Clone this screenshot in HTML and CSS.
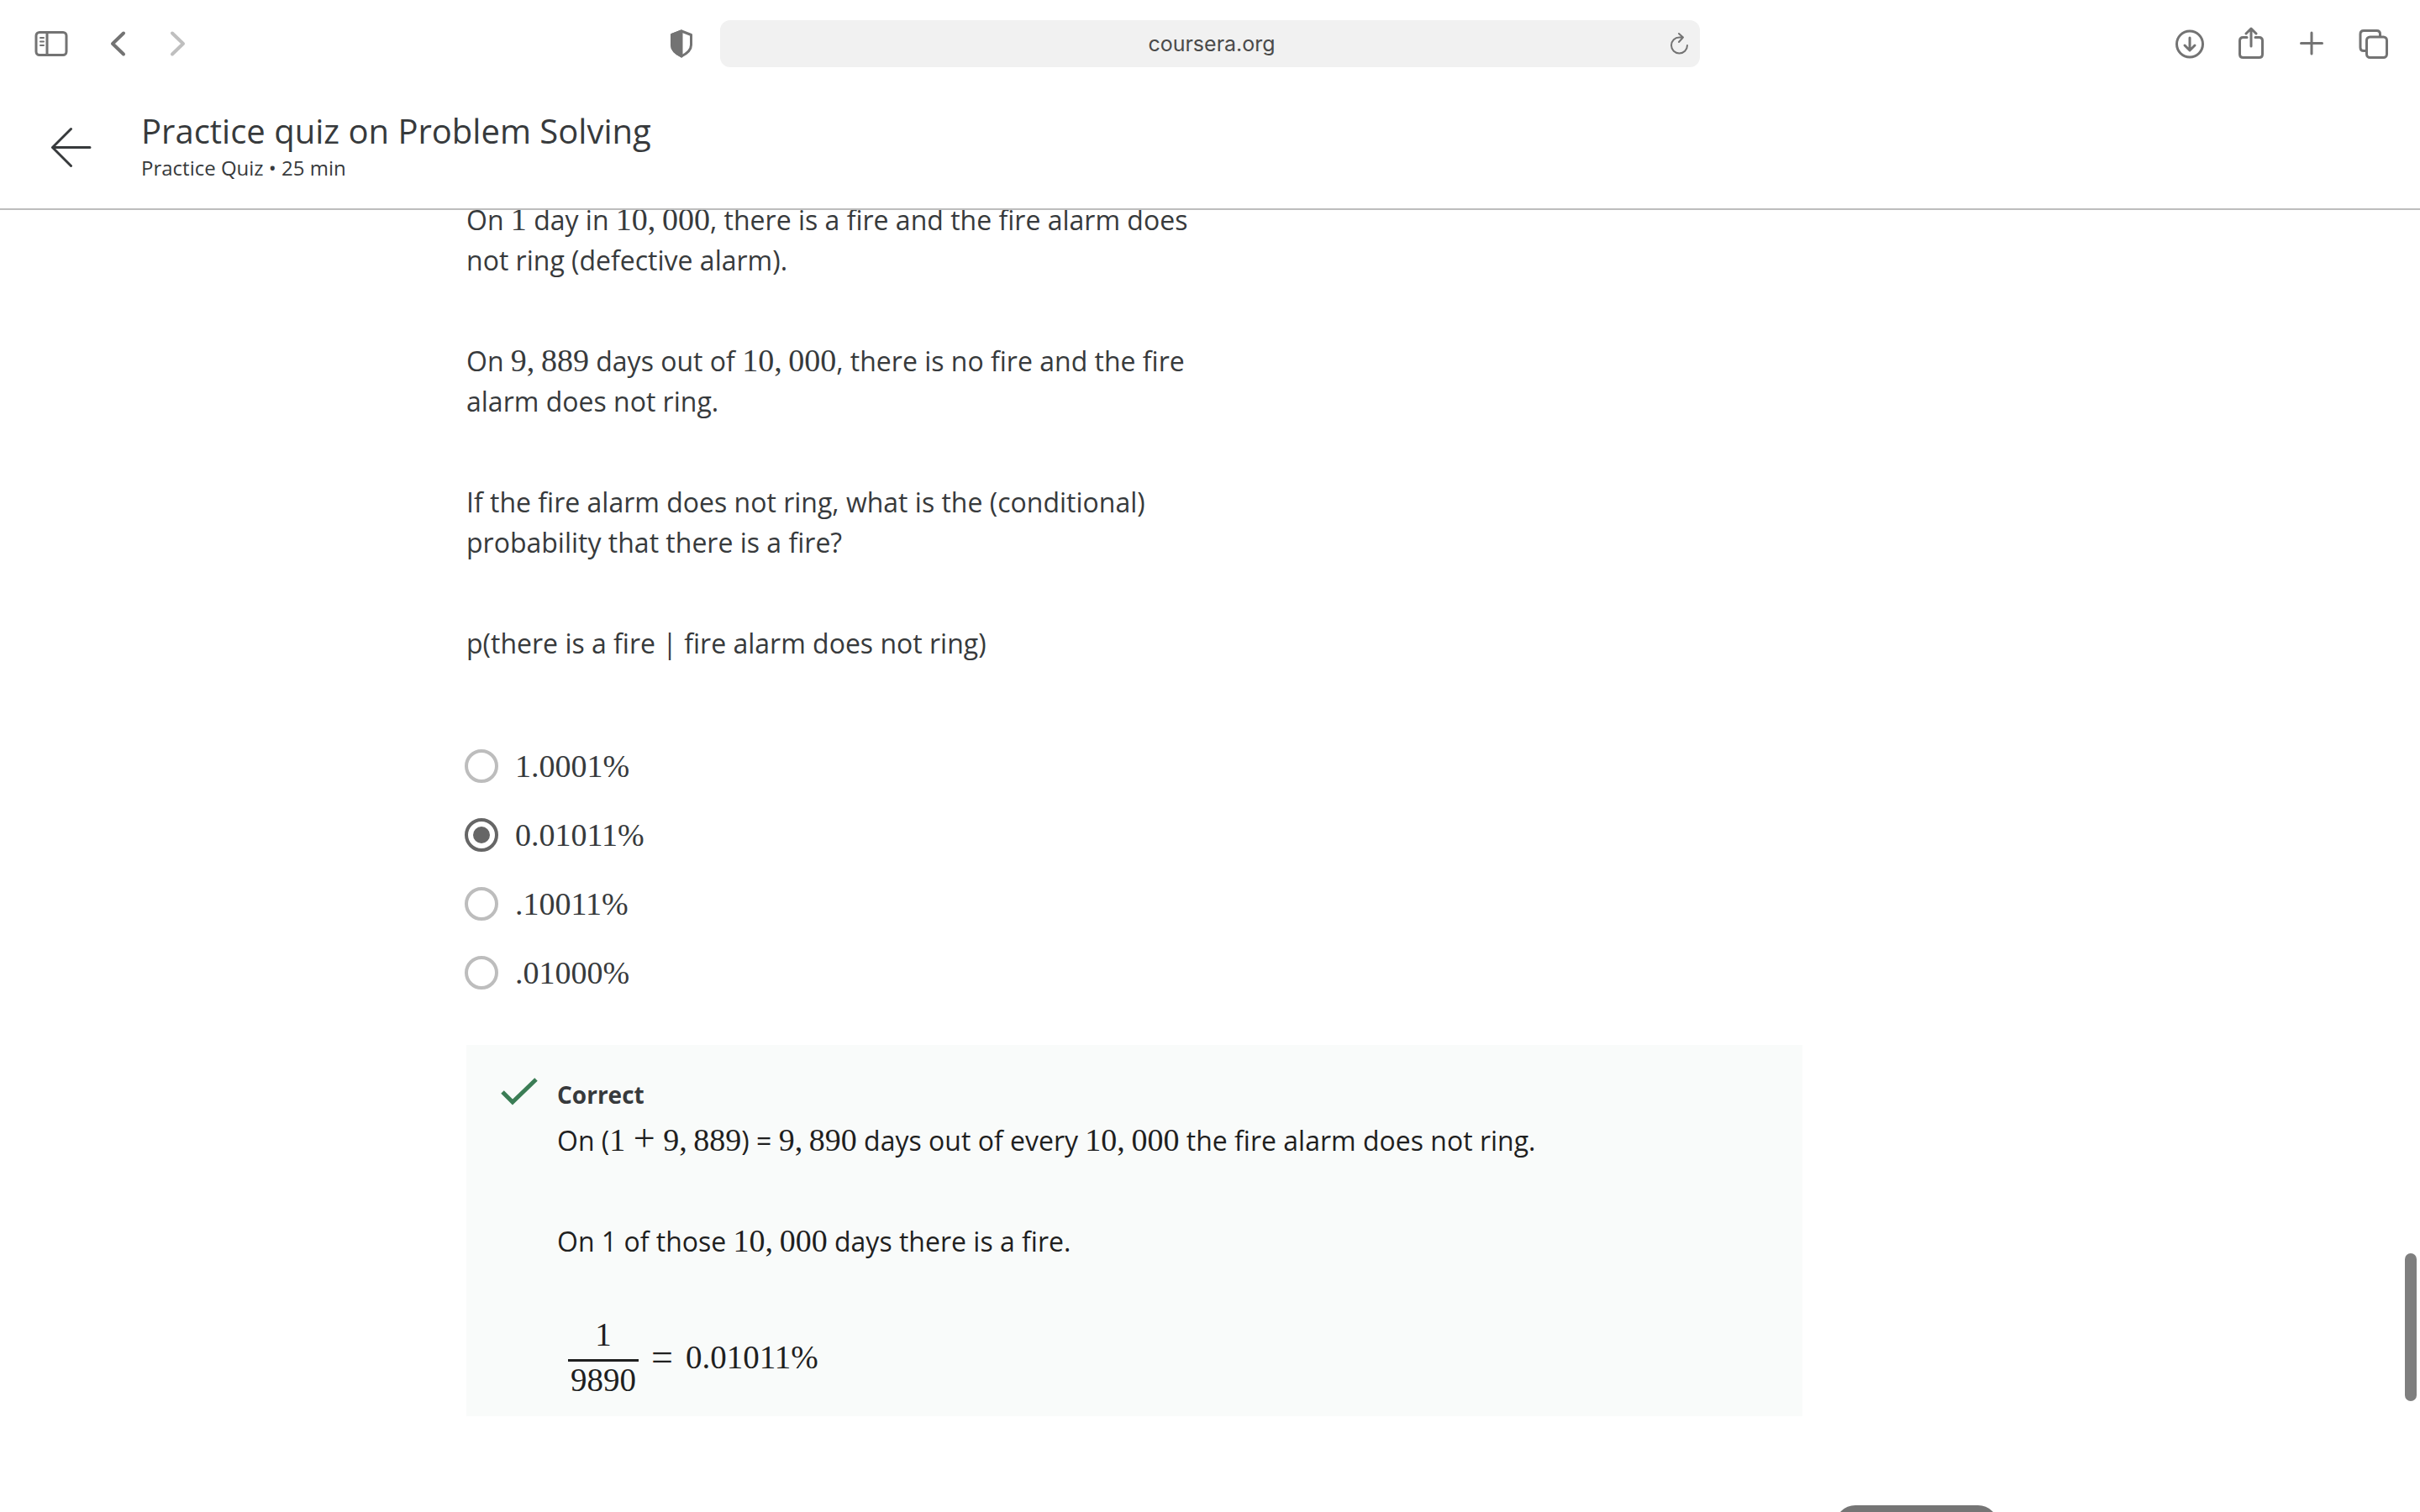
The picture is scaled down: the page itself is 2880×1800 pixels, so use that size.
FILE: index.html
```html
<!DOCTYPE html>
<html lang="en">
<head>
<meta charset="utf-8">
<title>Practice quiz on Problem Solving</title>
<link rel="stylesheet" href="styles.css">
</head>
<body>
<div class="toolbar">
  <div class="tools">
    <button class="tool" aria-label="Show sidebar"><svg width="40" height="32" viewBox="0 0 40 32"><rect x="2" y="2.500" width="36" height="27" rx="4"/><path d="M15 2.500v27"/><path class="thin" d="M7 9h4M7 13.500h4M7 18h4"/></svg></button>
    <button class="tool" aria-label="Back"><svg width="20" height="32" viewBox="0 0 20 32"><path class="thick" d="M16 3.500L3 16l13 12.500"/></svg></button>
    <button class="tool" aria-label="Forward" disabled><svg width="20" height="32" viewBox="0 0 20 32"><path class="thick" d="M4 3.500L17 16 4 28.500"/></svg></button>
    <button class="tool tool-privacy" aria-label="Privacy report"><svg width="28" height="36" viewBox="0 0 28 36"><path d="M14 3L2.500 7.500v12C2.500 25 8 30 14 33c6-3 11.500-8 11.500-13.500v-12z"/><path class="solid" d="M14 3L2.500 7.500v12C2.500 25 8 30 14 33z"/></svg></button>
  </div>
  <div class="urlbar">
    <input class="url" type="text" value="coursera.org" aria-label="Address">
    <button class="tool" aria-label="Reload"><svg width="24" height="28" viewBox="0 0 24 28"><path class="thin" d="M21 16a9.500 9.500 0 1 1-9.500-9.500H16M11 2l5 4.500-5 5.500"/></svg></button>
  </div>
  <div class="tools tools-right">
    <button class="tool" aria-label="Downloads"><svg width="36" height="40" viewBox="0 0 36 40"><circle cx="19" cy="20.500" r="15.500"/><path d="M19 13v14.500M13 22l6 6 6-6"/></svg></button>
    <button class="tool" aria-label="Share"><svg width="32" height="40" viewBox="0 0 32 40"><path d="M11 12.500H6.500q-4 0-4 4v16q0 4 4 4h19q4 0 4-4v-16q0-4-4-4H21M16 23V2.500M10 8l6-6 6 6"/></svg></button>
    <button class="tool" aria-label="New tab"><svg width="32" height="40" viewBox="0 0 32 40"><path d="M16 7v25M3.500 19.500h25"/></svg></button>
    <button class="tool" aria-label="Tab overview"><svg width="36" height="40" viewBox="0 0 36 40"><path d="M9 28.500H6q-4 0-4-4V8.500q0-4 4-4h15.500q4 0 4 4v3"/><rect x="9.500" y="12" width="24" height="24.500" rx="4"/></svg></button>
  </div>
</div>

<header class="quiz-header">
  <a class="back" href="#" aria-label="Back to course"><svg width="52" height="48" viewBox="0 0 52 48"><path d="M26.500 2.500L4.500 24.500l22 22M4.500 24.500H49"/></svg></a>
  <div class="heading">
    <h1 class="title">Practice quiz on Problem Solving</h1>
    <p class="subtitle">Practice Quiz • 25 min</p>
  </div>
</header>

<main class="scroll">
  <form class="question">
    <div class="prompt">
      <p>On <span class="math">1</span> day in <span class="math">10,&#8201;000</span>, there is a fire and the fire alarm does not ring (defective alarm).</p>
      <p>On <span class="math">9,&#8201;889</span> days out of <span class="math">10,&#8201;000</span>, there is no fire and the fire alarm does not ring.</p>
      <p>If the fire alarm does not ring, what is the (conditional) probability that there is a fire?</p>
      <p>p(there is a fire | fire alarm does not ring)</p>
    </div>
    <div class="options">
      <label class="option"><input type="radio" name="answer"><span>1.0001%</span></label>
      <label class="option"><input type="radio" name="answer" checked><span>0.01011%</span></label>
      <label class="option"><input type="radio" name="answer"><span>.10011%</span></label>
      <label class="option"><input type="radio" name="answer"><span>.01000%</span></label>
    </div>
    <section class="feedback">
      <svg class="check" width="44" height="36" viewBox="0 0 44 36"><path d="M2 18l12 12L42 3"/></svg>
      <div>
        <h2 class="verdict">Correct</h2>
        <p>On (<span class="math">1 <span class="operator">+</span> 9,&#8201;889</span>) = <span class="math">9,&#8201;890</span> days out of every <span class="math">10,&#8201;000</span> the fire alarm does not ring.</p>
        <p class="spaced">On 1 of those <span class="math">10,&#8201;000</span> days there is a fire.</p>
        <div class="equation">
          <span class="fraction"><span class="numerator">1</span><span class="denominator">9890</span></span>
          <span class="operator">=</span>
          <span>0.01011%</span>
        </div>
      </div>
    </section>
  </form>
</main>
<div class="thumb"></div>
<div class="pill"></div>
</body>
</html>
```

FILE: styles.css
```css
* { box-sizing: border-box; }

body {
  margin: 0;
  height: 100vh;
  display: flex;
  flex-direction: column;
  overflow: hidden;
  background: #fff;
  color: #373a3c;
  font-family: "Open Sans", sans-serif;
  font-size: 32px;
  line-height: 48px;
}

h1, h2, p { margin: 0; font-weight: 400; }

/* browser toolbar */
.toolbar {
  display: grid;
  grid-template-columns: 1fr minmax(0, 1166px) 1fr;
  align-items: center;
  height: 102px;
  padding-top: 2px;
}
.tools { display: flex; align-items: center; gap: 50px; padding: 0 32px 0 41px; }
.tools-right { gap: 40px; justify-content: flex-end; padding: 0 37px; }
.tool {
  display: flex;
  padding: 0;
  border: 0;
  background: none;
  color: #737373;
}
.tool-privacy { margin-left: auto; }
.tool svg, .back svg, .check {
  fill: none;
  stroke: currentColor;
  stroke-width: 3;
  stroke-linecap: round;
  stroke-linejoin: round;
}
.tool .thick { stroke-width: 4; }
.tool .thin { stroke-width: 2; }
.tool .solid { fill: currentColor; }
.tool:disabled { color: #bfbfbf; }
.urlbar {
  display: flex;
  align-items: center;
  height: 56px;
  padding: 0 12px;
  border-radius: 12px;
  background: #f1f1f1;
}
.url {
  flex: 1;
  min-width: 0;
  border: 0;
  padding: 0 0 0 28px;
  background: none;
  text-align: center;
  color: #4a4a4a;
  font: 25px/32px Inter, sans-serif;
}

/* quiz header */
.quiz-header {
  position: relative;
  z-index: 1;
  display: flex;
  align-items: center;
  gap: 58px;
  height: 148px;
  padding: 0 58px;
  border-bottom: 2px solid #bdbdbd;
  background: #fff;
}
.back { display: flex; color: #373a3c; }
.heading { padding-bottom: 2px; }
.title { font-size: 40px; line-height: 52px; }
.subtitle { font-size: 24px; line-height: 36px; }

/* scrolled question */
.scroll { flex: 1; min-height: 0; margin-top: -12px; overflow: hidden; }
.question { max-width: 1590px; margin-left: 555px; }
.prompt { display: grid; gap: 72px; max-width: 900px; }
.math, .option, .equation { font-family: "Liberation Serif", serif; }
.math { font-size: 38px; line-height: 44px; white-space: nowrap; }
.operator { font-size: 46px; line-height: 36px; }
.options { display: grid; gap: 34px; margin-top: 98px; }
.option { display: flex; align-items: center; gap: 20px; font-size: 38px; }
.option input {
  appearance: none;
  display: grid;
  place-items: center;
  width: 40px;
  height: 40px;
  margin: 0 0 0 -2px;
  border: 4px solid #bdbdbd;
  border-radius: 50%;
}
.option input:checked { border-color: #666; }
.option input:checked::before {
  content: "";
  width: 20px;
  height: 20px;
  border-radius: 50%;
  background: #666;
}
.feedback {
  display: flex;
  gap: 23px;
  margin-top: 62px;
  padding: 38px 40px 21px 41px;
  background: #f9fbfa;
  color: #1f1f1f;
}
.check { color: #3b7d55; stroke-width: 5; stroke-linecap: butt; stroke-linejoin: miter; }
.verdict { margin-bottom: 10px; color: #373a3c; font-size: 28px; font-weight: 700; line-height: 42px; }
.spaced { margin-top: 72px; }
.equation {
  display: flex;
  align-items: center;
  gap: 15px;
  margin-top: 65px;
  padding-left: 13px;
  font-size: 39px;
  line-height: 44px;
}
.fraction { display: grid; text-align: center; }
.numerator { padding-bottom: 7px; }
.denominator { padding: 0 3px; border-top: 3px solid; }

/* overlays */
.thumb {
  position: absolute;
  right: 4px;
  top: 1492px;
  width: 14px;
  height: 176px;
  border-radius: 7px;
  background: #7f7f7f;
}
.pill {
  position: absolute;
  right: 502px;
  bottom: 0;
  width: 194px;
  height: 8px;
  overflow: hidden;
}
.pill::before {
  content: "";
  display: block;
  height: 48px;
  border-radius: 24px;
  background: #757575;
}
```
